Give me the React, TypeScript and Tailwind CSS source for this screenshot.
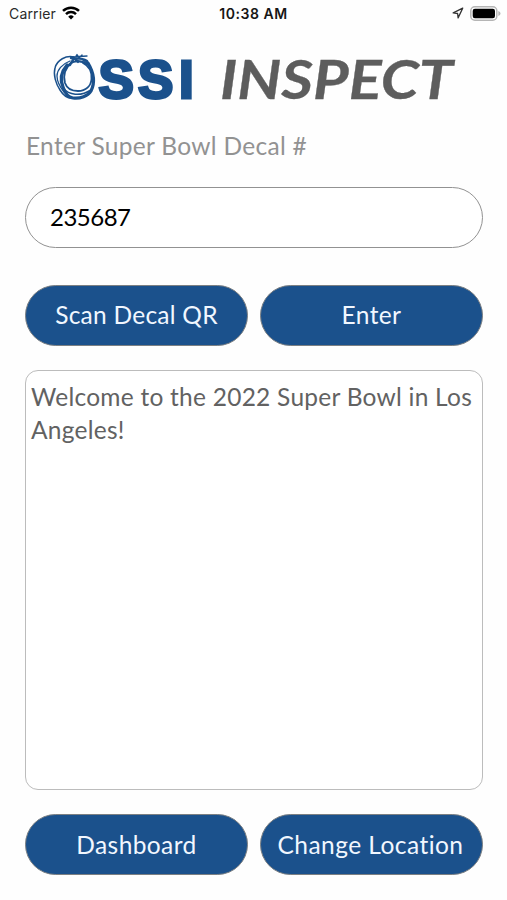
import { useState } from 'react'

interface PillButtonProps {
  label: string
  labelClass?: string
}

function PillButton({ label, labelClass = '' }: PillButtonProps) {
  return (
    <button
      type="button"
      className="flex h-[61px] items-center justify-center rounded-full border border-[#7c8083] bg-[#1b518c] text-[24.5px] leading-none whitespace-nowrap text-[#f1f7ff]"
    >
      <span className={labelClass}>{label}</span>
    </button>
  )
}

function StatusBar() {
  return (
    <div className="flex h-7 items-center justify-between pr-[6px] pl-[9px] font-['Inter',sans-serif] leading-none text-black">
      <div className="flex w-[160px] items-center gap-[6px]">
        <span className="text-[14px] tracking-[0.15px] text-[#2a2a2a]">Carrier</span>
        <svg width="18" height="14" viewBox="0 0 18 14" fill="none" stroke="#000" strokeWidth="2.5" className="-translate-y-px">
          <path d="M1 4.9a11.5 11.5 0 0 1 16 0" />
          <path d="M4 8.1a7.2 7.2 0 0 1 10 0" />
          <path d="M9 13.6 6.2 10.7a4 4 0 0 1 5.6 0Z" fill="#000" stroke="none" />
        </svg>
      </div>
      <span className="pl-[3px] text-[14px] font-semibold tracking-[0.55px] text-[#161616]">10:38 AM</span>
      <div className="flex w-[166px] -translate-y-px items-center justify-end gap-[6px]">
        <svg width="12" height="12" viewBox="0 0 12 12" fill="none" stroke="#333" strokeWidth="1.3" strokeLinejoin="round">
          <path d="M10.7 1.2 1.2 5.9l4.4.6.5 4.4Z" />
        </svg>
        <svg width="31" height="15" viewBox="0 0 31 15">
          <rect x="0.8" y="0.8" width="26" height="13.4" rx="4" fill="#fff" stroke="#b5b5b5" strokeWidth="1.5" />
          <rect x="2.7" y="2.7" width="22.3" height="9.6" rx="2.2" fill="#000" />
          <path d="M28.3 5v5c1.3-.5 2.2-1.4 2.2-2.5S29.6 5.5 28.3 5Z" fill="#b5b5b5" />
        </svg>
      </div>
    </div>
  )
}

function Logo() {
  return (
    <svg width="507" height="82" viewBox="0 28 507 82" className="block">
      {/* Hand-scribbled ring standing in for the O */}
      <g fill="none" stroke="#1b518c" strokeLinecap="round" strokeLinejoin="round">
        <path strokeWidth="1.8" d="M72 62C65 68 63 76 65 83C67 89 72 91 78 91C86 91 91 86 91.500 79C92 72 89 66 83 63" />
        <path strokeWidth="3.2" d="M67 65C61 72 60 80 63 87C65 93 69 97.500 73 98C80 99 88 96 91 91C95 83 94 73 88 63" />
        <path strokeWidth="1.5" d="M74 57C66 55 57 60 55 68C53 75 56 84 60 90C63 95 67 98 72 98.500" />
        <path strokeWidth="1.3" d="M70 61C62 64 57 70 57 76C57 82 60 87 64 92L69 97" />
        <path strokeWidth="1.5" d="M63 88C69 95 80 97 91 90" />
        <path strokeWidth="2.4" d="M71 58C76 59 81 57 87 61M69 65C74 59 82 61 87 64M70 65L74 58L78 62" />
        <path strokeWidth="1.3" d="M72 57L87 56M76 56L77 54.500L79 58L82 55M83 60C91 65 94 73 93 82" />
      </g>
      <text
        x="98.5 138 179"
        y="98"
        fill="#1b518c"
        stroke="#1b518c"
        strokeWidth="3"
        className="font-['Liberation_Sans',Arial,sans-serif] text-[53px] font-bold"
      >
        SSI
      </text>
      <text
        x="220"
        y="98.5"
        textLength="233"
        lengthAdjust="spacingAndGlyphs"
        fill="#5d5d5d"
        stroke="#5d5d5d"
        strokeWidth="0.3"
        className="font-['Lato',sans-serif] text-[54px] font-bold italic"
      >
        INSPECT
      </text>
    </svg>
  )
}

export default function App() {
  const [decal, setDecal] = useState('235687')

  return (
    <main className="flex h-[900px] w-[507px] flex-col bg-[#fefefe] font-['Lato',sans-serif] [font-variant-ligatures:none]">
      <StatusBar />
      <Logo />

      <div className="flex flex-1 flex-col px-[25px] pb-[25px]">
        <label htmlFor="decal" className="mt-[20px] pl-px text-[24.5px] leading-[32px] tracking-[0.3px] text-[#929292]">
          Enter Super Bowl Decal #
        </label>
        <input
          id="decal"
          value={decal}
          onChange={e => setDecal(e.target.value)}
          className="mt-[25px] h-[61px] w-[458px] rounded-full border border-[#929292] bg-white px-6 pb-[3px] text-[24px] tracking-[-0.5px] text-black outline-none"
        />

        <div className="mt-[37px] grid w-[458px] grid-cols-2 gap-3">
          <PillButton label="Scan Decal QR" labelClass="tracking-[0.25px]" />
          <PillButton label="Enter" labelClass="tracking-[0.4px]" />
        </div>

        <div className="mt-6 w-[458px] flex-1 rounded-[13px] border-[1.5px] border-[#bcbcbc] bg-white px-[5px] pt-[9px] text-[24.5px] leading-[33px] tracking-[0.25px] text-[#626262]">
          <p className="whitespace-nowrap">
            Welcome to the 2022 Super Bowl in Los
            <br />
            Angeles!
          </p>
        </div>

        <div className="mt-6 grid w-[458px] grid-cols-2 gap-3">
          <PillButton label="Dashboard" labelClass="translate-y-px tracking-[0.4px]" />
          <PillButton label="Change Location" labelClass="-translate-x-px translate-y-px tracking-[0.45px]" />
        </div>
      </div>
    </main>
  )
}
